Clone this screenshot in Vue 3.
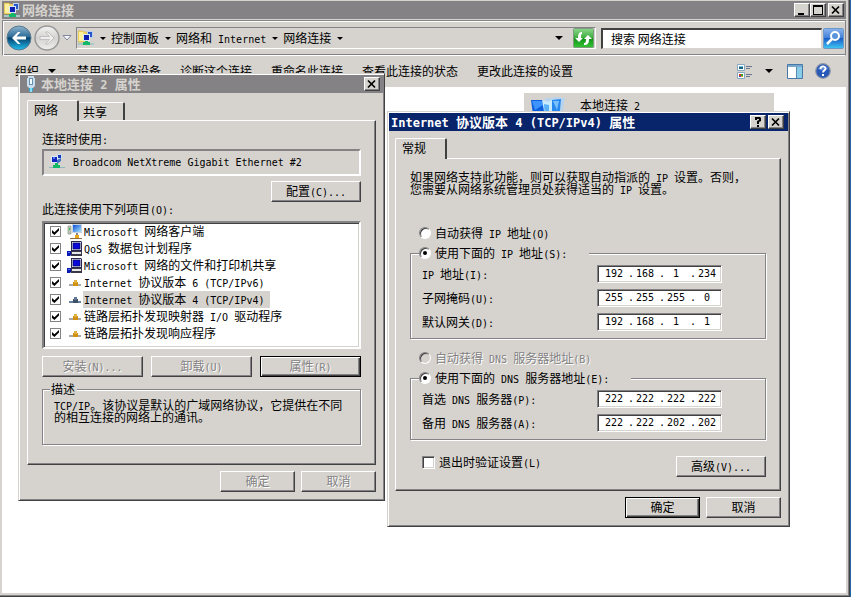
<script setup>
import { h, ref } from 'vue'

// Sets ASCII runs in the half-width face, everything else in the CJK face.
const Txt = (props) =>
  h(
    'span',
    { class: 'txt' },
    props.t
      .split(/([\x20-\x7e]+)/)
      .filter(Boolean)
      .map((run) => (/^[\x20-\x7e]/.test(run) ? h('span', { class: 'lat' }, run) : run))
  )
Txt.props = ['t']

const crumbs = ['控制面板', '网络和 Internet', '网络连接']
const commands = ['禁用此网络设备', '诊断这个连接', '重命名此连接', '查看此连接的状态', '更改此连接的设置']

const items = ref([
  { id: 'client', icon: 'i-client', text: 'Microsoft 网络客户端', on: true },
  { id: 'qos', icon: 'i-service', text: 'QoS 数据包计划程序', on: true },
  { id: 'share', icon: 'i-service', text: 'Microsoft 网络的文件和打印机共享', on: true },
  { id: 'v6', icon: 'i-proto', text: 'Internet 协议版本 6 (TCP/IPv6)', on: true },
  { id: 'v4', icon: 'i-proto-blue', text: 'Internet 协议版本 4 (TCP/IPv4)', on: true, selected: true },
  { id: 'map', icon: 'i-proto', text: '链路层拓扑发现映射器 I/O 驱动程序', on: true },
  { id: 'resp', icon: 'i-proto', text: '链路层拓扑发现响应程序', on: true }
])

const ipMode = ref('manual')
const dnsMode = ref('manual')
const verify = ref(false)

const ipFields = ref([
  { id: 'ip', label: 'IP 地址(I):', octets: ['192', '168', '1', '234'] },
  { id: 'mask', label: '子网掩码(U):', octets: ['255', '255', '255', '0'] },
  { id: 'gateway', label: '默认网关(D):', octets: ['192', '168', '1', '1'] }
])
const dnsFields = ref([
  { id: 'dns1', label: '首选 DNS 服务器(P):', octets: ['222', '222', '222', '222'] },
  { id: 'dns2', label: '备用 DNS 服务器(A):', octets: ['222', '222', '202', '202'] }
])
</script>

<template>
  <svg class="defs" width="0" height="0" aria-hidden="true">
    <defs>
      <linearGradient id="g-back" x1="0" y1="0" x2="0" y2="1">
        <stop offset="0" stop-color="#8fb4cc" /><stop offset=".45" stop-color="#2c6c98" />
        <stop offset=".5" stop-color="#06426f" /><stop offset="1" stop-color="#1fc0f0" />
      </linearGradient>
      <linearGradient id="g-fwd" x1="0" y1="0" x2="0" y2="1">
        <stop offset="0" stop-color="#f4f4f4" /><stop offset=".5" stop-color="#d4d2d0" />
        <stop offset="1" stop-color="#efefef" />
      </linearGradient>
      <linearGradient id="g-green" x1="0" y1="0" x2="0" y2="1">
        <stop offset="0" stop-color="#8cd88c" /><stop offset=".48" stop-color="#3fae3f" />
        <stop offset=".5" stop-color="#109018" /><stop offset="1" stop-color="#35c435" />
      </linearGradient>
      <linearGradient id="g-blue" x1="0" y1="0" x2="0" y2="1">
        <stop offset="0" stop-color="#8ab4ee" /><stop offset=".48" stop-color="#3f7fd8" />
        <stop offset=".5" stop-color="#1a5ec8" /><stop offset="1" stop-color="#40c8f4" />
      </linearGradient>
      <linearGradient id="g-screen" x1="0" y1="0" x2="1" y2="1">
        <stop offset="0" stop-color="#0a50d8" /><stop offset="1" stop-color="#a8e4fc" />
      </linearGradient>
      <symbol id="i-adapter" viewBox="0 0 16 16">
        <path d="M8 1h5v5H8z" fill="#c8dcf4" /><path d="M9 2h3v3H9z" fill="#1838b8" />
        <path d="M2 3h7v7H2z" fill="#dce8f8" /><path d="M3 4h5v5H3z" fill="#1024c0" />
        <path d="M8 7l4-2v3l-4 3z" fill="#4070c8" /><path d="M4 4h2v2H4z" fill="#5078e8" />
        <path d="M6 10h3v2h2v3H4v-3h2z" fill="#10b868" /><path d="M0 14h4v1H0zM11 14h5v1h-5z" fill="#90b8c0" />
      </symbol>
      <symbol id="i-net" viewBox="0 0 16 16">
        <path d="M0 1h5l1 1h3v10H0z" fill="#f4d868" stroke="#c8a838" stroke-width=".5" />
        <path d="M1 2h4v9H1z" fill="#fcf0a0" />
        <path d="M9 1h6v7H9z" fill="#b8d0f0" /><path d="M10 2h4v5h-4z" fill="#2858c8" />
        <path d="M5 4h7v7H5z" fill="#d8e8fc" /><path d="M6 5h5v5H6z" fill="#1020b0" />
        <path d="M7 11h3v1h2v3H5v-3h2z" fill="#10b868" /><path d="M0 13h5v2H0zM12 13h4v2h-4z" fill="#a8c8c8" />
      </symbol>
      <symbol id="i-client" viewBox="0 0 16 16">
        <path d="M1 2h3v8H1z" fill="#c0c8c0" stroke="#78886c" stroke-width=".6" /><path d="M2 4h1v2H2z" fill="#30c030" />
        <path d="M5 0h10v9H5z" fill="#c8d4e4" /><path d="M6 1h8v7H6z" fill="url(#g-screen)" />
        <path d="M9 9h2v2H9z" fill="#888" /><path d="M8 11h4v3H8z" fill="#e8a818" />
        <path d="M3 14h12v1H3z" fill="#907040" />
      </symbol>
      <symbol id="i-service" viewBox="0 0 16 16">
        <path d="M4 0h10l1 1v9H4z" fill="#282850" /><path d="M5 1h9v8H5z" fill="#d8d8e0" />
        <path d="M6 2h7v6H6z" fill="#0808d8" stroke="#000058" stroke-width=".6" />
        <path d="M3 10h12v5H4z" fill="#383848" /><path d="M5 11h9v2H5z" fill="#e8e8e8" />
        <path d="M0 10h4v4l-1 1H0z" fill="#0818b0" /><path d="M1 11h2v1H1z" fill="#5070f0" />
      </symbol>
      <symbol id="i-proto" viewBox="0 0 16 16">
        <path d="M2 9h12v2H2z" fill="#a8a8a8" /><path d="M6 7h5v4H6z" fill="#d09010" />
        <path d="M7 5h3v3H7z" fill="#e0b040" />
      </symbol>
      <symbol id="i-proto-blue" viewBox="0 0 16 16">
        <path d="M2 9h12v2H2z" fill="#6880a0" /><path d="M6 7h5v4H6z" fill="#405068" />
        <path d="M7 5h3v3H7z" fill="#607898" />
      </symbol>
      <symbol id="i-close" viewBox="0 0 10 10">
        <path d="M1 1.5l7 7M8 1.5l-7 7" stroke="#000" stroke-width="1.7" />
      </symbol>
    </defs>
  </svg>

  <main class="window">
    <header class="titlebar inactive">
      <svg class="ico"><use href="#i-net" /></svg>
      <h1><Txt t="网络连接" /></h1>
      <button class="cap" aria-label="最小化"><svg viewBox="0 0 10 10"><path d="M1 8h6v2H1z" /></svg></button>
      <button class="cap" aria-label="最大化">
        <svg viewBox="0 0 10 10"><path d="M0 0h10v10H0zM1 2v7h8V2z" fill-rule="evenodd" /></svg>
      </button>
      <button class="cap close" aria-label="关闭"><svg><use href="#i-close" /></svg></button>
    </header>

    <nav class="navbar">
      <button class="round" aria-label="后退">
        <svg viewBox="0 0 26 26">
          <circle cx="13" cy="13" r="12" fill="url(#g-back)" stroke="#587890" />
          <path d="M6 13l6-6h2.500l-4 4.500H20v3h-9.500l4 4.500H12z" fill="#fff" />
        </svg>
      </button>
      <button class="round" aria-label="前进">
        <svg viewBox="0 0 26 26">
          <circle cx="13" cy="13" r="12" fill="url(#g-fwd)" stroke="#989898" stroke-width="1.500" />
          <path d="M20 13l-6-6h-2.500l4 4.500H6v3h9.500l-4 4.500H14z" fill="#eee" stroke="#b8b8b8" stroke-width=".8" />
        </svg>
      </button>
      <button class="history" aria-label="最近的页面">
        <svg viewBox="0 0 10 8"><path d="M1 1.500h8L5 6z" fill="#f8f8f8" stroke="#8088a0" /></svg>
      </button>
      <div class="address">
        <svg class="ico"><use href="#i-net" /></svg>
        <i class="arrow first"></i>
        <template v-for="c in crumbs" :key="c">
          <a href="#"><Txt :t="c" /></a>
          <i class="arrow"></i>
        </template>
        <button class="drop" aria-label="以前的位置"><i class="arrow big"></i></button>
        <button class="refresh" aria-label="刷新">
          <svg viewBox="0 0 21 20">
            <rect x=".5" y=".5" width="20" height="19" rx="1" fill="url(#g-green)" stroke="#7c9c7c" />
            <path d="M2 10h3c0-4 1-6 4-6v2c-1 0-1 2-1 4h2l-4 4z" fill="#fff" />
            <path d="M19 10h-3c0 4-1 6-5 6v-2c2 0 2-2 2-4h-2l4-4z" fill="#fff" transform="translate(0 1)" />
          </svg>
        </button>
      </div>
      <div class="search">
        <input type="text" aria-label="搜索" placeholder="搜索 网络连接" />
        <button aria-label="开始搜索">
          <svg viewBox="0 0 21 21">
            <rect x=".5" y=".5" width="20" height="20" rx="1" fill="url(#g-blue)" stroke="#6c98c8" />
            <circle cx="12" cy="8" r="4" fill="#5c94dc" stroke="#fff" stroke-width="2" />
            <path d="M9 11l-5 5" stroke="#fff" stroke-width="2.500" />
          </svg>
        </button>
      </div>
    </nav>

    <div class="commands">
      <button class="cmd">组织<i class="arrow big"></i></button>
      <button v-for="c in commands" :key="c" class="cmd">{{ c }}</button>
      <span class="grow"></span>
      <button class="cmd view" aria-label="更改视图">
        <svg width="16" height="15" viewBox="0 0 16 15">
          <path d="M.5.5h7v6h-7zM.5 8.500h7v6h-7z" fill="#fff" stroke="#88a8c0" />
          <path d="M2 3h4v2H2z" fill="#186878" /><path d="M2 2h4v1H2z" fill="#68b8e8" />
          <path d="M2 10h2v2H2z" fill="#e03020" /><path d="M4 10h2v2H4z" fill="#30a030" />
          <path d="M2 12h2v1H2z" fill="#3050d0" /><path d="M4 12h2v1H4z" fill="#e8b020" />
          <path d="M9 2.500h6M9 4.500h4M9 10.500h6M9 12.500h4" stroke="#687890" />
        </svg>
        <i class="arrow big"></i>
      </button>
      <button class="cmd" aria-label="预览窗格">
        <svg width="16" height="15" viewBox="0 0 16 15">
          <path d="M.5.5h15v14H.5z" fill="#fff" stroke="#4878a8" /><path d="M1 1h14v2H1z" fill="#78a8d0" />
          <path d="M10 3h5v11h-5z" fill="#88cce8" /><path d="M9.500 3v11" stroke="#5888b0" />
        </svg>
      </button>
      <button class="cmd" aria-label="帮助">
        <svg width="16" height="16" viewBox="0 0 16 16">
          <circle cx="8" cy="8" r="7.300" fill="#2858b8" stroke="#9098a8" stroke-width="1.200" />
          <path d="M3 6a5.500 5.500 0 0110 0c-3 2-7 2-10 0z" fill="#6088d8" />
          <path d="M5.500 6c0-3.500 5-3.300 5-.5C10.500 7.500 8 7.500 8 9.500" fill="none" stroke="#fff" stroke-width="1.800" />
          <path d="M7 11h2v2H7z" fill="#fff" />
        </svg>
      </button>
    </div>

    <section class="content">
      <div class="tile">
        <svg width="36" height="28" viewBox="0 0 36 28">
          <path d="M14 2h7l2-1 11 1-4 24H16z" fill="#b8d4ec" /><path d="M21 4l9-1-2 22h-8z" fill="#2888f0" />
          <path d="M22 5h6l-2 9z" fill="#78c0fc" />
          <path d="M0 4h12l3 22H3z" fill="#0c60e0" /><path d="M1 5h10l1 4-8 5z" fill="#3c94fc" />
          <path d="M11 4l6 2 4-2v20l-6 2z" fill="#c8ecff" /><path d="M13 8l5 1v15l-4 1z" fill="#58b0f8" />
        </svg>
        <Txt t="本地连接 2" />
      </div>
    </section>
  </main>

  <section class="dialog lan" role="dialog" aria-label="本地连接 2 属性">
    <header class="titlebar inactive">
      <svg class="ico" viewBox="0 0 16 16">
        <path d="M6 0h6v2h1v8l-2 2H7l-2-2V2h1z" fill="#c8dcec" /><path d="M7 2h4v7H7z" fill="#6890b0" />
        <path d="M8 3h2v5H8z" fill="#f4fcff" /><path d="M7 12h4v3H7z" fill="#30a8d8" /><path d="M8 12h2v4H8z" fill="#80e0f8" />
      </svg>
      <h2><Txt t="本地连接 2 属性" /></h2>
      <button class="cap" aria-label="关闭"><svg><use href="#i-close" /></svg></button>
    </header>
    <div class="body">
      <div class="tabs">
        <button class="tab active">网络</button>
        <button class="tab">共享</button>
      </div>
      <div class="panel">
        <p class="line"><Txt t="连接时使用:" /></p>
        <div class="device">
          <svg class="ico"><use href="#i-adapter" /></svg>
          <Txt t="Broadcom NetXtreme Gigabit Ethernet #2" />
        </div>
        <button class="btn wide config"><Txt t="配置(C)..." /></button>
        <p class="line"><Txt t="此连接使用下列项目(O):" /></p>
        <ul class="list">
          <li v-for="it in items" :key="it.id">
            <input :id="it.id" v-model="it.on" type="checkbox" class="check flat" />
            <svg class="ico"><use :href="'#' + it.icon" /></svg>
            <label :for="it.id" :class="{ selected: it.selected }"><Txt :t="it.text" /></label>
          </li>
        </ul>
        <div class="actions">
          <button class="btn" disabled><Txt t="安装(N)..." /></button>
          <button class="btn" disabled><Txt t="卸载(U)" /></button>
          <button class="btn default" disabled><Txt t="属性(R)" /></button>
        </div>
        <fieldset class="desc">
          <legend>描述</legend>
          <p><Txt t="TCP/IP。该协议是默认的广域网络协议，它提供在不同的相互连接的网络上的通讯。" /></p>
        </fieldset>
      </div>
      <footer>
        <button class="btn" disabled>确定</button>
        <button class="btn" disabled>取消</button>
      </footer>
    </div>
  </section>

  <section class="dialog tcp" role="dialog" aria-label="Internet 协议版本 4 (TCP/IPv4) 属性">
    <header class="titlebar">
      <h2><Txt t="Internet 协议版本 4 (TCP/IPv4) 属性" /></h2>
      <button class="cap" aria-label="帮助">
        <svg viewBox="0 0 10 10"><path d="M2 0h5l1 1v3L6 5v2H4V4l2-1V2H4v1H2zM4 8h2v2H4z" /></svg>
      </button>
      <button class="cap close" aria-label="关闭"><svg><use href="#i-close" /></svg></button>
    </header>
    <div class="body">
      <div class="tabs"><button class="tab active">常规</button></div>
      <div class="panel">
        <p class="intro"><Txt t="如果网络支持此功能，则可以获取自动指派的 IP 设置。否则，您需要从网络系统管理员处获得适当的 IP 设置。" /></p>
        <label class="option first"><input v-model="ipMode" type="radio" name="ip" value="auto" /><Txt t="自动获得 IP 地址(O)" /></label>
        <fieldset class="group">
          <legend>
            <label class="option"><input v-model="ipMode" type="radio" name="ip" value="manual" /><Txt t="使用下面的 IP 地址(S):" /></label>
          </legend>
          <div v-for="f in ipFields" :key="f.id" class="field">
            <label :for="f.id"><Txt :t="f.label" /></label>
            <div class="ip">
              <template v-for="(o, i) in f.octets" :key="i">
                <span v-if="i" class="dot">.</span>
                <input :id="i ? f.id + i : f.id" v-model="f.octets[i]" type="text" maxlength="3" :aria-label="i ? f.label : null" />
              </template>
            </div>
          </div>
        </fieldset>
        <label class="option off"><input v-model="dnsMode" type="radio" name="dns" value="auto" disabled /><Txt t="自动获得 DNS 服务器地址(B)" /></label>
        <fieldset class="group">
          <legend>
            <label class="option"><input v-model="dnsMode" type="radio" name="dns" value="manual" /><Txt t="使用下面的 DNS 服务器地址(E):" /></label>
          </legend>
          <div v-for="f in dnsFields" :key="f.id" class="field">
            <label :for="f.id"><Txt :t="f.label" /></label>
            <div class="ip">
              <template v-for="(o, i) in f.octets" :key="i">
                <span v-if="i" class="dot">.</span>
                <input :id="i ? f.id + i : f.id" v-model="f.octets[i]" type="text" maxlength="3" :aria-label="i ? f.label : null" />
              </template>
            </div>
          </div>
        </fieldset>
        <div class="last">
          <label class="option"><input v-model="verify" type="checkbox" class="check" /><Txt t="退出时验证设置(L)" /></label>
          <button class="btn wide"><Txt t="高级(V)..." /></button>
        </div>
      </div>
      <footer>
        <button class="btn default">确定</button>
        <button class="btn">取消</button>
      </footer>
    </div>
  </section>
</template>

<style>
body {
  background: #2868a8;
}
#app {
  font: 12px/12px 'Noto Sans CJK SC', sans-serif;
  color: #000;
}
#app .lat {
  font-family: 'DejaVu Sans Mono', monospace;
  font-size: 10px;
  line-height: 0;
  white-space: pre-wrap;
}
#app h1 .lat,
#app h2 .lat {
  font-size: 12px;
}
</style>

<style scoped>
* {
  box-sizing: border-box;
}
.defs {
  position: absolute;
}
h1,
h2,
p,
ul {
  margin: 0;
  padding: 0;
}
button,
input {
  font: inherit;
  color: inherit;
  margin: 0;
}
button {
  padding: 0;
  border: 0;
  background: none;
}
button svg {
  display: block;
}
.grow {
  flex: 1;
}
.ico {
  width: 16px;
  height: 16px;
  flex: none;
}

.window {
  display: flex;
  flex-direction: column;
  min-height: 100vh;
  margin-right: 1px;
  padding: 1px 3px 3px 2px;
  background: #d6d3ce;
  border: solid #424142;
  border-width: 0 1px 1px 0;
  box-shadow: inset -1px -1px #848284;
}
.titlebar {
  display: flex;
  align-items: center;
  height: 18px;
  padding: 0 2px;
  background: #08246b;
  color: #fff;
}
.titlebar.inactive {
  background: #848284;
  color: #d6d3ce;
}
.titlebar h1,
.titlebar h2 {
  flex: 1;
  font-size: 13px;
  line-height: 16px;
  font-weight: bold;
}
.titlebar .ico + h1 {
  padding-left: 2px;
}
.cap {
  width: 16px;
  height: 14px;
  display: grid;
  place-items: center;
  background: #d6d3ce;
  border: 1px solid;
  border-color: #fff #424142 #424142 #fff;
  box-shadow: inset -1px -1px #848284;
}
.cap svg {
  width: 10px;
  height: 10px;
}
.cap.close {
  margin-left: 2px;
}

.navbar {
  display: flex;
  align-items: center;
  margin-top: 1px;
  height: 36px;
  padding: 0 1px 0 3px;
  border: 1px solid #848284;
  border-bottom-color: #fff;
  box-shadow: inset 1px 1px #fff, inset 0 -1px #848284;
}
.round {
  width: 26px;
  height: 26px;
  margin-right: 2px;
}
.history {
  width: 10px;
  height: 8px;
  margin-right: 4px;
}
.address {
  flex: 1;
  display: flex;
  align-items: center;
  height: 22px;
  margin-right: 5px;
  padding: 0 1px;
  border: 1px solid;
  border-color: #848284 #fff #fff #848284;
}
.address a {
  color: #000;
  text-decoration: none;
}
.address a,
.cmd {
  padding-bottom: 1px;
}
.arrow {
  border: solid transparent;
  border-width: 3px 3px 0;
  border-top-color: #000;
  margin: 0 5px 0 6px;
}
.arrow.big {
  border-width: 4px 4px 0;
  margin: 0;
}
.drop {
  margin-left: auto;
  padding: 6px;
}
.drop .arrow {
  display: block;
}
.refresh {
  width: 21px;
  height: 20px;
  margin-left: 4px;
}
.search {
  display: flex;
  flex: 0 0 243px;
  gap: 1px;
}
.search input {
  flex: 1;
  min-width: 0;
  height: 21px;
  padding: 0 8px 1px;
  background: #fff;
  border: 1px solid;
  border-color: #424142 #d6d3ce #d6d3ce #424142;
  border-width: 2px 1px 1px 2px;
}
.search input::placeholder {
  color: #000;
  opacity: 1;
}
.search button {
  width: 21px;
  height: 21px;
}
.commands {
  display: flex;
  align-items: center;
  gap: 19px;
  height: 31px;
  padding: 0 15px 0 13px;
}
.cmd {
  display: flex;
  align-items: center;
  gap: 9px;
  white-space: nowrap;
}
.commands .cmd:first-child {
  margin-right: 2px;
}
.cmd.view {
  gap: 12px;
  margin-right: -5px;
}
.commands .cmd:last-child {
  margin-left: -7px;
}
.content {
  flex: 1;
  padding: 6px 72px 0 0;
  background: #fff;
}
.tile {
  width: 250px;
  height: 48px;
  margin-left: auto;
  padding: 3px 7px;
  display: flex;
  gap: 13px;
  background: #d6d3ce;
}
.tile .txt {
  padding-top: 3px;
}

.dialog {
  position: absolute;
  background: #d6d3ce;
  border: 1px solid;
  border-color: #d6d3ce #424142 #424142 #d6d3ce;
  box-shadow: inset 1px 1px #fff, inset -1px -1px #848284;
  padding: 1px;
}
.lan {
  left: 18px;
  top: 73px;
  width: 367px;
}
.tcp {
  left: 387px;
  top: 111px;
  width: 403px;
}
.dialog .titlebar {
  padding: 0 3px 0 2px;
}
.tcp .titlebar {
  padding-right: 4px;
}
.lan .titlebar h2 {
  padding-left: 3px;
}
.body {
  padding: 7px;
}
.tcp .body {
  padding-left: 6px;
}
.tabs {
  display: flex;
  align-items: flex-end;
  height: 20px;
}
.tab {
  height: 18px;
  width: 46px;
  padding: 0 10px 0 4px;
  text-align: left;
  background: #d6d3ce;
  border: solid #fff;
  border-width: 1px 2px 0 0;
  border-right-color: #424142;
  border-radius: 2px 2px 0 0;
}
.tab.active {
  position: relative;
  width: 52px;
  height: 21px;
  margin-bottom: -1px;
  padding: 0 10px 2px 6px;
  border-left-width: 1px;
}
.panel {
  padding: 12px 14px 19px;
  border: 1px solid;
  border-color: #fff #424142 #424142 #fff;
  box-shadow: inset -1px -1px #848284;
}
.tcp .panel {
  padding-bottom: 13px;
}
.intro {
  padding-right: 12px;
}
.btn {
  height: 21px;
  min-width: 75px;
  padding-bottom: 1px;
  text-align: center;
  background: #d6d3ce;
  border: 1px solid;
  border-color: #fff #424142 #424142 #fff;
  box-shadow: inset -1px -1px #848284;
}
.btn.wide {
  width: 90px;
}
.btn.default {
  border-color: #000;
  box-shadow: inset 1px 1px #fff, inset -1px -1px #424142, inset -2px -2px #848284;
}
.btn:disabled,
.off {
  color: #848284;
  text-shadow: 1px 1px #fff;
}
.device {
  display: flex;
  align-items: center;
  gap: 8px;
  height: 27px;
  margin: 4px 0 5px;
  padding: 0 5px 4px;
  border: 2px solid;
  border-color: #848284 #fff #fff #848284;
}
.config {
  display: block;
  margin: 0 0 1px auto;
}
.list {
  margin: 6px 0 7px;
  padding: 0 0 5px 6px;
  list-style: none;
  background: #fff;
  border: 2px solid;
  border-color: #848284 #fff #fff #848284;
  box-shadow: inset 1px 1px #424142, inset -1px -1px #d6d3ce;
}
.list li {
  display: flex;
  align-items: center;
  height: 17px;
}
.list .ico {
  margin-left: 5px;
}
.list label {
  line-height: 15px;
  padding: 0 6px 2px 1px;
}
.list .selected {
  background: #d6d3ce;
}
.check {
  appearance: none;
  width: 13px;
  height: 13px;
  background: #fff;
  border: 1px solid;
  border-color: #848284 #fff #fff #848284;
  box-shadow: inset 1px 1px #424142, inset -1px -1px #d6d3ce;
}
.check.flat {
  width: 11px;
  height: 11px;
  margin-right: 1px;
  border-color: #848284;
  box-shadow: none;
  display: grid;
  place-items: center;
}
.check.flat:checked::before {
  content: '';
  width: 7px;
  height: 7px;
  background: #000;
  clip-path: polygon(0 30%, 35% 60%, 100% 0, 100% 35%, 35% 100%, 0 70%);
}
.actions {
  display: flex;
  justify-content: space-between;
}
.actions .btn {
  width: 101px;
}
fieldset {
  min-width: 0;
  margin: 0;
  border: 1px solid #848284;
  box-shadow: 1px 1px #fff, inset 1px 1px #fff;
}
legend {
  background: #d6d3ce;
}
.desc {
  margin-top: 6px;
  padding: 4px 11px 21px;
}
.desc legend {
  margin-left: -4px;
  padding: 0 2px 0 1px;
}
footer {
  display: flex;
  justify-content: flex-end;
  gap: 6px;
  margin-top: 6px;
}
.option {
  display: flex;
  align-items: center;
  gap: 4px;
  height: 12px;
}
.panel > .option {
  margin: 13px 0 8px 9px;
}
.panel > .option.first {
  margin-top: 32px;
}
.option input[type='radio'] {
  appearance: none;
  width: 12px;
  height: 12px;
  border-radius: 50%;
  display: grid;
  place-items: center;
  background: #fff;
  border: 1px solid;
  border-color: #848284 #fff #fff #848284;
  box-shadow: inset 1px 1px #424142;
}
.option input[type='radio']:checked::before {
  content: '';
  width: 4px;
  height: 4px;
  border-radius: 50%;
  background: #000;
}
.option input[type='radio']:disabled {
  background: #d6d3ce;
}
.group {
  padding: 6px 43px 7px 11px;
}
.group legend {
  margin-left: -3px;
  padding: 0 22px 0 0;
}
.field {
  display: flex;
  align-items: center;
  justify-content: space-between;
}
.field + .field {
  margin-top: 6px;
}
.ip {
  display: flex;
  align-items: center;
  height: 18px;
  width: 125px;
  background: #fff;
  border: 1px solid;
  border-color: #848284 #fff #fff #848284;
  box-shadow: inset 1px 1px #424142, inset -1px -1px #d6d3ce;
  padding-left: 2px;
}
.ip input {
  width: 28px;
  height: 12px;
  padding: 0;
  border: 0;
  text-align: center;
  background: none;
}
.ip input,
.ip .dot {
  font-family: 'DejaVu Sans Mono', monospace;
  font-size: 10px;
}
.ip .dot {
  width: 3px;
}
.last {
  display: flex;
  justify-content: space-between;
  align-items: flex-start;
  margin-top: 16px;
}
.last .option {
  padding-left: 12px;
}
</style>
